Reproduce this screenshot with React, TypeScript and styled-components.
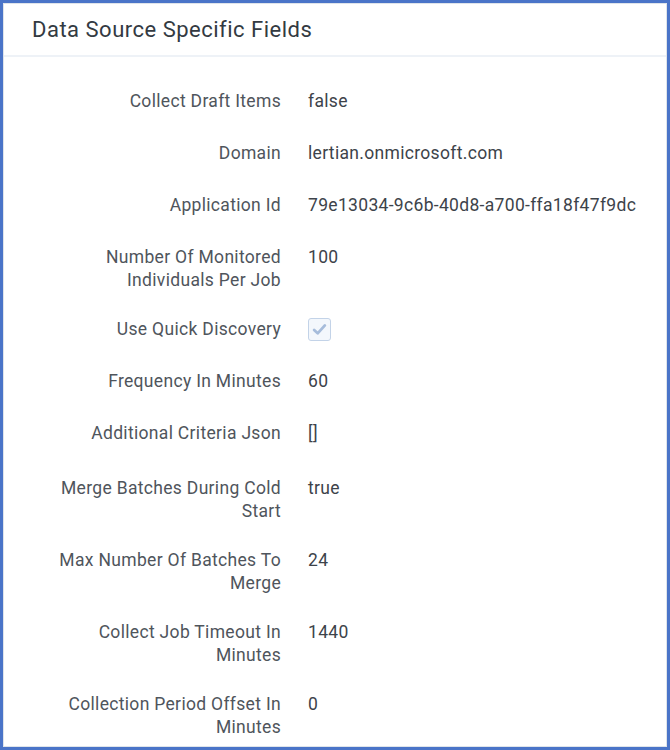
import React from "react";
import styled, { createGlobalStyle } from "styled-components";

const Global = createGlobalStyle`
  html, body { margin: 0; padding: 0; background: #ffffff; }
  body { font-family: Roboto, "Liberation Sans", Arial, sans-serif; }
`;

const Frame = styled.div`
  width: 670px;
  height: 750px;
  box-sizing: border-box;
  border: 3px solid #4a74c8;
  background: #ffffff;
  display: flex;
`;

const Panel = styled.section`
  flex: 1;
  border: 1px solid #dfe4ea;
  display: flex;
  flex-direction: column;
  overflow: hidden;
`;

const Header = styled.header`
  height: 53px;
  box-sizing: border-box;
  padding: 0 0 0 28px;
  display: flex;
  align-items: center;
  border-bottom: 2px solid #eef2f7;
`;

const Title = styled.h2`
  margin: 0;
  font-size: 22px;
  font-weight: 400;
  color: #333a42;
  letter-spacing: 0.5px;
`;

const Body = styled.div`
  display: grid;
  grid-template-columns: 230px 1fr;
  column-gap: 27px;
  row-gap: 26px;
  padding: 33px 0 0 47px;
`;

const Label = styled.div`
  text-align: right;
  font-size: 17.5px;
  line-height: 23px;
  letter-spacing: 0.32px;
  color: #4f555c;
`;

const Value = styled.div<{ $minHeight?: number }>`
  min-height: ${(p) => p.$minHeight ?? 26}px;
  font-size: 17.5px;
  line-height: 23px;
  letter-spacing: 0.32px;
  color: #3d434a;
  display: flex;
  align-items: flex-start;
`;

const CheckBox = styled.span`
  width: 23px;
  height: 23px;
  box-sizing: border-box;
  border: 1.5px solid #c3d3e8;
  border-radius: 3px;
  background: #f3f7fc;
  display: flex;
  align-items: center;
  justify-content: center;
`;

type Field = { label: string; value: string | boolean; minHeight?: number };

const fields: Field[] = [
  { label: "Collect Draft Items", value: "false" },
  { label: "Domain", value: "lertian.onmicrosoft.com" },
  { label: "Application Id", value: "79e13034-9c6b-40d8-a700-ffa18f47f9dc" },
  { label: "Number Of Monitored Individuals Per Job", value: "100" },
  { label: "Use Quick Discovery", value: true },
  { label: "Frequency In Minutes", value: "60" },
  { label: "Additional Criteria Json", value: "[]", minHeight: 29 },
  { label: "Merge Batches During Cold Start", value: "true" },
  { label: "Max Number Of Batches To Merge", value: "24" },
  { label: "Collect Job Timeout In Minutes", value: "1440" },
  { label: "Collection Period Offset In Minutes", value: "0" },
];

const Check = () => (
  <CheckBox>
    <svg width="15" height="13" viewBox="0 0 14 12">
      <path
        d="M2 6.5 L5.3 9.6 L12 2.2"
        fill="none"
        stroke="#a6bcdb"
        strokeWidth="2.6"
        strokeLinecap="round"
        strokeLinejoin="round"
      />
    </svg>
  </CheckBox>
);

export default function App() {
  return (
    <>
      <Global />
      <Frame>
        <Panel>
          <Header>
            <Title>Data Source Specific Fields</Title>
          </Header>
          <Body>
            {fields.map((f) => (
              <React.Fragment key={f.label}>
                <Label>{f.label}</Label>
                <Value $minHeight={f.minHeight}>
                  {typeof f.value === "boolean" ? <Check /> : f.value}
                </Value>
              </React.Fragment>
            ))}
          </Body>
        </Panel>
      </Frame>
    </>
  );
}
